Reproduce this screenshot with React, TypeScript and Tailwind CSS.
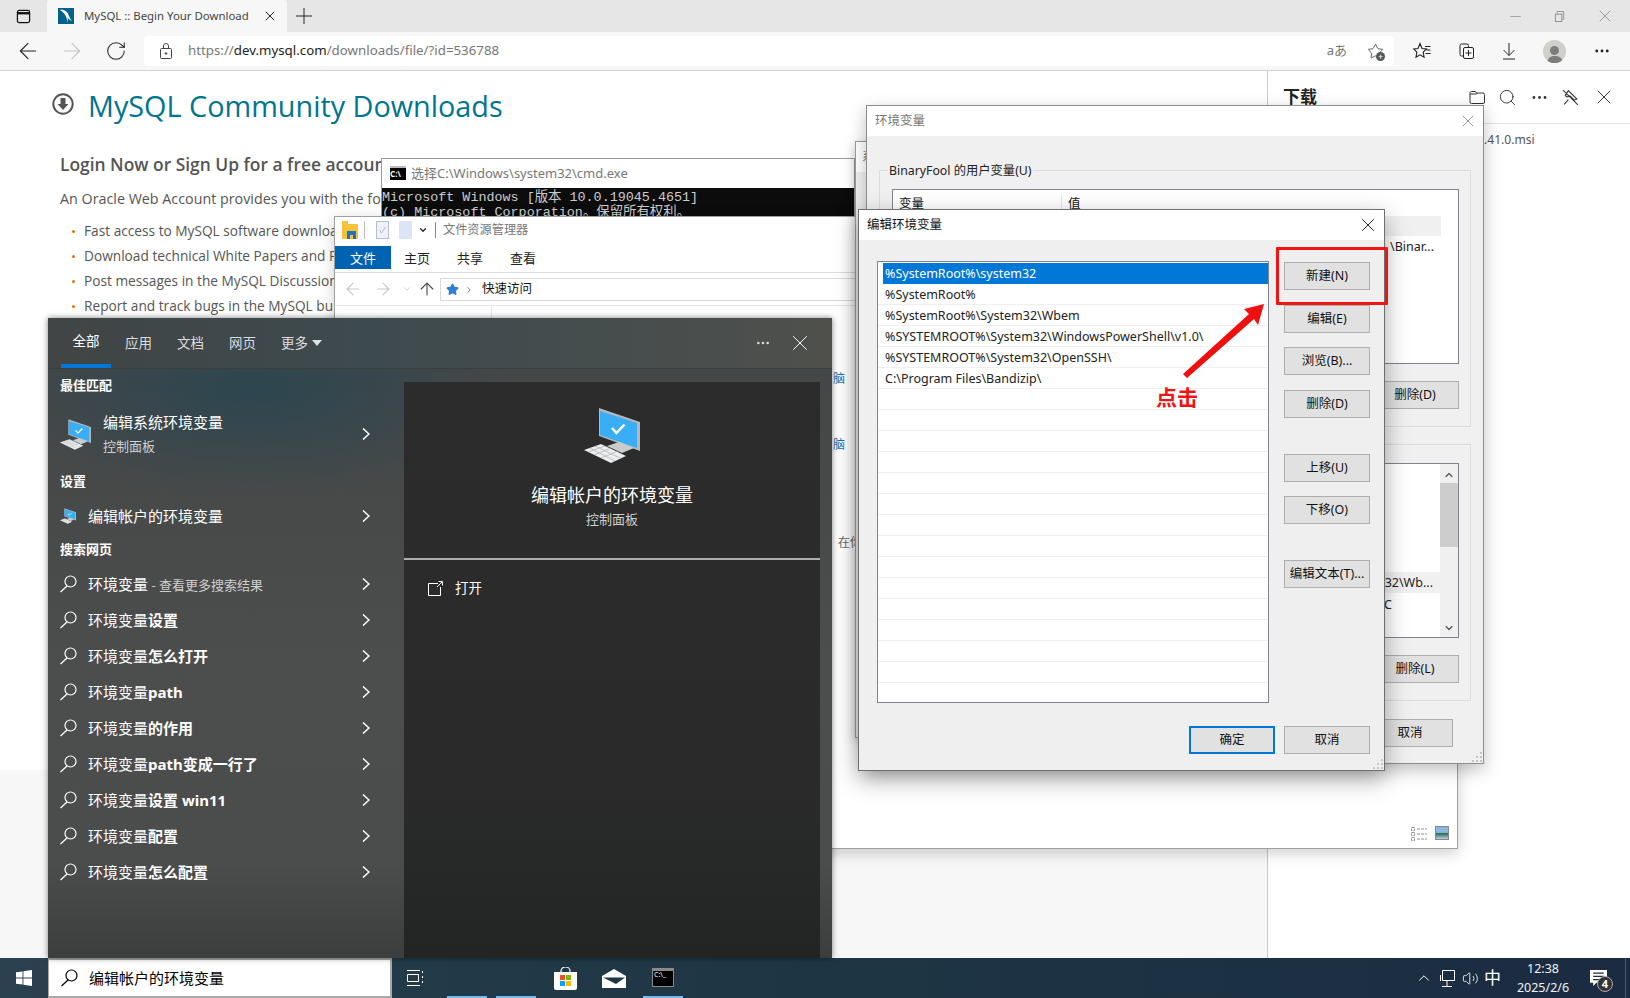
import { ArrowLeft, ArrowRight, ArrowUp, ChevronDown, ChevronRight, ChevronUp, Ellipsis, Minus, Plus, RotateCw, Search, Star, Volume2, X } from 'lucide-react'

const SEARCH_ROWS = [
  { main: '环境变量', hint: ' - 查看更多搜索结果' },
  { main: '环境变量', bold: '设置' },
  { main: '环境变量', bold: '怎么打开' },
  { main: '环境变量', bold: 'path' },
  { main: '环境变量', bold: '的作用' },
  { main: '环境变量', bold: 'path变成一行了' },
  { main: '环境变量', bold: '设置 win11' },
  { main: '环境变量', bold: '配置' },
  { main: '环境变量', bold: '怎么配置' },
]

const PATH_ROWS = [
  '%SystemRoot%\\system32',
  '%SystemRoot%',
  '%SystemRoot%\\System32\\Wbem',
  '%SYSTEMROOT%\\System32\\WindowsPowerShell\\v1.0\\',
  '%SYSTEMROOT%\\System32\\OpenSSH\\',
  'C:\\Program Files\\Bandizip\\',
  '', '', '', '', '', '', '', '', '', '', '', '', '', '', '',
]

// only what shows left of the windows lying over the page
const PAGE_BULLETS = [
  'Fast access to MySQL software downloa',
  'Download technical White Papers and P',
  'Post messages in the MySQL Discussion',
  'Report and track bugs in the MySQL bu',
]

function PcIcon({ className }: { className?: string }) {
  return (
    <svg viewBox="15 8 56 55" className={className}>
      <path d="M30 8 71 22V51L30 36Z" fill="#b4b8bb" />
      <path d="M31 11 68 23V48L31 35Z" fill="#3aaef5" />
      <path d="M43 28l4.500 5 8-8.500" fill="none" stroke="#fff" strokeWidth="2.400" />
      <path d="M38 46 50 42 65 48 53 53Z" fill="#c9cccd" />
      <path d="M15 50 32 44 57 56 42 63Z" fill="#eceeef" />
      <path d="M21 48 46 61M26 46 51 58M19 52 36 46M25 55 42 48M32 58 49 51" stroke="#a9adb0" strokeWidth="0.7" />
    </svg>
  )
}

function WinSearch({ className }: { className?: string }) {
  return (
    <svg viewBox="0 0 18 18" className={`w-[18px] h-[18px] shrink-0 ${className ?? ''}`} fill="none" stroke="currentColor" strokeWidth="1.200">
      <circle cx="11.500" cy="6.500" r="5.500" />
      <path d="M8 11 1.500 17" />
    </svg>
  )
}

function RowChevron() {
  return (
    <svg viewBox="0 0 8 12" className="w-[8px] h-[12px] shrink-0" fill="none" stroke="#fff" strokeWidth="1.500">
      <path d="M1 .5 7 6 1 11.500" />
    </svg>
  )
}

function MySqlFavicon() {
  return (
    <svg viewBox="0 0 16 16" className="w-4 h-4 shrink-0">
      <rect width="16" height="16" fill="#00618a" />
      <path d="M2 2C6 1 10 4 11 8c.6 2 1.600 3 3 5-2-.7-3.600-2-4.400-3.500L10 15 8.200 9C7.500 6.500 5 4 2 2Z" fill="#fff" />
    </svg>
  )
}

function WinButton({ label, focused, className }: { label: string; focused?: boolean; className?: string }) {
  return (
    <div className={`h-[28px] shrink-0 flex items-center justify-center bg-[#e1e1e1] text-[12.500px] text-[#111] ${focused ? 'border-2 border-[#0078d7]' : 'border border-[#adadad]'} ${className ?? 'w-[86px]'}`}>
      {label}
    </div>
  )
}

function ResizeGrip() {
  return (
    <svg viewBox="0 0 10 10" className="w-[10px] h-[10px]">
      <path d="M8 0h2v2H8zM4 4h2v2H4zM8 4h2v2H8zM0 8h2v2H0zM4 8h2v2H4zM8 8h2v2H8z" fill="#c4c4c4" />
    </svg>
  )
}

function BrowserChrome() {
  return (
    <div className="shrink-0">
      <div className="h-[32px] bg-[#e6e6e6] flex items-end">
        <div className="w-[47px] h-[32px] flex items-center justify-center">
          <svg viewBox="0 0 16 16" className="w-[15px] h-[15px]" fill="none" stroke="#111" strokeWidth="1.300">
            <rect x="1.500" y="1.500" width="13" height="13" rx="2" />
            <path d="M1.500 4.500h13" strokeWidth="2.500" />
          </svg>
        </div>
        <div className="w-[240px] h-[32px] bg-[#f7f7f7] rounded-t-[3px] flex items-center pl-[11px] pr-[9px]">
          <MySqlFavicon />
          <span className="ml-[10px] text-[11.400px] text-[#444] whitespace-nowrap flex-1">MySQL :: Begin Your Download</span>
          <X size={16} strokeWidth={1.5} className="text-[#222]" />
        </div>
        <div className="w-[34px] h-[32px] flex items-center justify-center">
          <Plus size={26} strokeWidth={0.9} className="text-[#222]" />
        </div>
        <div className="flex-1" />
        <div className="w-[138px] h-[32px] flex items-center justify-around text-[#8c8c8c]">
          <Minus size={17} strokeWidth={1} />
          <svg viewBox="0 0 12 12" className="w-[11px] h-[11px]" fill="none" stroke="#8c8c8c">
            <rect x="1.500" y="3.500" width="7" height="8" />
            <path d="M3.500 3V.500h7V9H9" />
          </svg>
          <X size={20} strokeWidth={1} />
        </div>
      </div>
      <div className="h-[38px] bg-[#f7f7f7] border-b border-[#d2d2d2] flex items-center box-content">
        <div className="w-[144px] flex items-center pl-[15px]">
          <ArrowLeft size={26} strokeWidth={1} className="text-[#222]" />
          <ArrowRight size={26} strokeWidth={1} className="ml-[18px] text-[#c4c4c4]" />
          <RotateCw size={22} strokeWidth={1.1} className="ml-[20px] text-[#222]" />
        </div>
        <div className="w-[1250px] h-[30px] bg-white rounded-[4px] flex items-center pl-[16px]">
          <svg viewBox="0 0 12 16" className="w-[12px] h-[16px]" fill="none" stroke="#444">
            <rect x="0.500" y="5.500" width="11" height="10" rx="1" />
            <path d="M3.500 5V3a2.500 2.500 0 0 1 5 0v2" />
            <circle cx="6" cy="10.500" r="0.800" fill="#444" />
          </svg>
          <span className="ml-[16px] text-[13.300px] text-[#777] whitespace-nowrap">
            https://<span className="text-[#222]">dev.mysql.com</span>/downloads/file/?id=536788
          </span>
          <div className="flex-1" />
          <span className="text-[13px] text-[#777] mr-[20px]">aあ</span>
          <div className="relative mr-[10px]">
            <Star size={17} strokeWidth={1.2} className="text-[#444]" />
            <div className="absolute -right-[1px] -bottom-[1px] w-[9px] h-[9px] rounded-full bg-[#555] text-white text-[9px] leading-[9px] text-center">+</div>
          </div>
        </div>
        <div className="flex-1 flex items-center justify-around pl-[6px] pr-[6px]">
          <svg viewBox="0 0 18 18" className="w-[18px] h-[18px]" fill="none" stroke="#222" strokeWidth="1.100">
            <path d="M7 1.500 9 6.500l4.500.5-3.300 3.200.9 5L7 12.800 3 15.200l.9-5L.7 7l4.300-.5zM12 4.500h5.500M13.500 8h4M12.500 11.500h5" />
          </svg>
          <svg viewBox="0 0 18 18" className="w-[18px] h-[18px]" fill="none" stroke="#222">
            <path d="M5 14H3.500A1.500 1.500 0 0 1 2 12.500v-9A1.500 1.500 0 0 1 3.500 2H9a1.500 1.500 0 0 1 1.500 1.500V5" />
            <rect x="5.500" y="5.500" width="10" height="11" rx="1.500" />
            <path d="M10.500 8v6M7.500 11h6" />
          </svg>
          <svg viewBox="0 0 14 18" className="w-[14px] h-[18px]" fill="none" stroke="#222">
            <path d="M7 1v12.500M1.500 8 7 13.500 12.500 8M1 17h12" />
          </svg>
          <div className="w-[23px] h-[23px] rounded-full bg-[#cfcfcc] flex flex-col items-center justify-end overflow-hidden">
            <div className="w-[9px] h-[9px] rounded-full bg-[#7d7d7b]" />
            <div className="w-[16px] h-[7px] mt-[1px] rounded-t-full bg-[#7d7d7b]" />
          </div>
          <Ellipsis size={18} strokeWidth={1.800} className="text-[#222]" />
        </div>
      </div>
    </div>
  )
}

function WebPage() {
  return (
    <div className="flex-1 min-h-0 flex">
      <div className="w-[1267px] flex flex-col">
        <div className="h-[699px] pl-[52px]">
          <div className="flex items-center pt-[18px]">
            <svg viewBox="0 0 22 22" className="w-[22px] h-[22px] -mt-[4px]" fill="none">
              <circle cx="11" cy="11" r="9.700" stroke="#555" strokeWidth="2" />
              <path d="M8.500 5h5v6h3L11 17l-5.500-6h3z" fill="#555" />
            </svg>
            <h1 className="ml-[14px] text-[28.800px] leading-[34px] text-[#00758f] font-['Open_Sans',sans-serif] whitespace-nowrap">MySQL Community Downloads</h1>
          </div>
          <div className="pl-[8px] pt-[28px] font-['Open_Sans',sans-serif] text-[#555]">
            <h2 className="text-[17.400px] leading-[26px] font-semibold whitespace-nowrap">Login Now or Sign Up for a free accoun</h2>
            <p className="mt-[10px] text-[14.300px] leading-[24px] whitespace-nowrap">An Oracle Web Account provides you with the fo</p>
            <ul className="mt-[7px] pl-[24px] text-[13.700px] leading-[25px] whitespace-nowrap">
              {PAGE_BULLETS.map(t => (
                <li key={t} className="relative">
                  <span className="absolute -left-[12px] top-[12px] w-[3px] h-[3px] rounded-full bg-[#e76f00]" />
                  {t}
                </li>
              ))}
            </ul>
          </div>
        </div>
        <div className="flex-1 bg-[#f7f7f7]" />
      </div>
      <aside className="flex-1 border-l border-[#c8c8c8]">
        <div className="h-[53px] border-b border-[#e2e2e2] flex items-center pl-[15px] pr-[14px]">
          <span className="text-[17px] font-bold text-[#222] flex-1">下载</span>
          <div className="flex items-center gap-[13px] text-[#333]">
            <svg viewBox="0 0 16 16" className="w-[16px] h-[16px]" fill="none" stroke="#333">
              <path d="M3 2.500h3.500l1 1.500H14a1.500 1.500 0 0 1 1.500 1.500v7.500a1.500 1.500 0 0 1-1.500 1.500H2.500A1.500 1.500 0 0 1 1 13V4a1.500 1.500 0 0 1 2-1.500ZM1 5h6.500l1-1" />
            </svg>
            <Search size={19} strokeWidth={1.2} />
            <Ellipsis size={19} strokeWidth={1.600} />
            <svg viewBox="0 0 16 16" className="w-[17px] h-[17px]" fill="none" stroke="#333">
              <path d="M1 1l14 14M6 1.500l8 8-2.500 1-4-4-3 1L3 6zM6 10l-4 4.500" />
            </svg>
            <X size={24} strokeWidth={1} />
          </div>
        </div>
        <div className="ml-[216px] mt-[7px] text-[12.100px] leading-[18px] text-[#555] whitespace-nowrap">.41.0.msi</div>
      </aside>
    </div>
  )
}

function CmdWindow() {
  return (
    <div className="absolute left-[381px] top-[158px] w-[474px] h-[58px] border border-[#9a9a9a] border-b-0 bg-white overflow-hidden">
      <div className="h-[29px] pb-[2px] flex items-center pl-[8px]">
        <div className="w-[16px] h-[14px] bg-black border-t-[2px] border-[#bbb] text-white text-[8px] leading-[11px] font-bold">C:\</div>
        <span className="ml-[5px] text-[13px] leading-[18px] text-[#777] whitespace-nowrap">选择C:\Windows\system32\cmd.exe</span>
      </div>
      <div className="bg-[#0c0c0c] text-[#ccc] font-['Liberation_Mono','Noto_Sans_CJK_SC',monospace] text-[13.400px] leading-[15px] h-[40px] pt-[2px] whitespace-nowrap">
        <div>Microsoft Windows [版本 10.0.19045.4651]</div>
        <div>(c) Microsoft Corporation。保留所有权利。</div>
      </div>
    </div>
  )
}

function ExplorerWindow() {
  return (
    <div className="absolute left-[334px] top-[216px] w-[1124px] h-[633px] bg-white border border-[#a0a0a0] shadow-[0_4px_14px_rgba(0,0,0,0.2)] flex flex-col">
      <div className="h-[29px] pb-[3px] flex items-center pl-[7px] shrink-0">
        <svg viewBox="0 0 16 18" className="w-[16px] h-[18px]">
          <path d="M0 0h6v3h10v15H0z" fill="#f5c33b" />
          <path d="M5 10h9v8h-3v-4H8v4H5z" fill="#1e73c8" />
        </svg>
        <div className="w-px h-[18px] bg-[#bbb] ml-[6px]" />
        <svg viewBox="0 0 13 18" className="ml-[11px] w-[13px] h-[18px]" fill="#eef2f8" stroke="#b3bdcc">
          <rect x="0.500" y="0.500" width="12" height="17" />
          <path d="M3.500 9l2 3 4-6" fill="none" />
        </svg>
        <div className="ml-[10px] w-[13px] h-[18px] bg-[#dbe5f5]" />
        <ChevronDown size={10} strokeWidth={3} className="ml-[6px] text-[#222]" />
        <div className="w-px h-[16px] bg-[#888] ml-[7px]" />
        <span className="ml-[7px] text-[12.200px] leading-[18px] text-[#777]">文件资源管理器</span>
      </div>
      <div className="h-[26px] flex items-start text-[13px] leading-[24px] text-[#222] shrink-0">
        <div className="w-[56px] h-[23px] bg-[#0063b1] text-white text-center">文件</div>
        <span className="w-[52px] text-center">主页</span>
        <span className="w-[54px] text-center">共享</span>
        <span className="w-[52px] text-center">查看</span>
      </div>
      <div className="h-[33px] border-t border-[#dcdcdc] flex items-start pt-[5px] shrink-0 pl-[8px]">
        <ArrowLeft size={20} strokeWidth={1.300} className="mt-[1px] text-[#c6c6c6]" />
        <ArrowRight size={20} strokeWidth={1.300} className="mt-[1px] ml-[10px] text-[#c6c6c6]" />
        <ChevronDown size={10} className="mt-[6px] ml-[9px] text-[#c6c6c6]" />
        <ArrowUp size={20} strokeWidth={1.300} className="mt-[1px] ml-[5px] text-[#444]" />
        <div className="ml-[3px] flex-1 h-[23px] border border-[#d9d9d9] flex items-center pl-[5px] text-[12.500px] text-[#111]">
          <Star size={13} className="text-[#2d7fd6] fill-[#2d7fd6]" />
          <ChevronRight size={10} className="ml-[5px] mr-[8px] text-[#666]" />
          快速访问
        </div>
      </div>
      <div className="flex-1 min-h-0 flex flex-col border-t border-[#e6e6e6] relative">
        <div className="w-[157px] h-[20px] border-r border-[#e6e6e6]" />
        <div className="pl-[498px] pt-[44px] text-[12px] text-[#1a6fb0] leading-[18px]">脑</div>
        <div className="pl-[498px] pt-[48px] text-[12px] text-[#1a6fb0] leading-[18px]">脑</div>
        <div className="ml-[503px] mt-[80px] text-[12px] text-[#666] leading-[18px] whitespace-nowrap">在你</div>
        <div className="flex-1" />
        <div className="h-[22px] flex items-start justify-end gap-[8px] pr-[8px]">
          <svg viewBox="0 0 16 16" className="w-[16px] h-[16px]" fill="none" stroke="#8d8d8d">
            <path d="M.500 1.500h3v3h-3zM.500 6.500h3v3h-3zM.500 11.500h3v3h-3zM6 3h10M6 8h10M6 13h10" strokeDasharray="3 1" />
          </svg>
          <div className="w-[14px] h-[14px] border border-[#888] bg-[linear-gradient(180deg,#8db7de_45%,#2c6a4f_55%,#bcd3ea)]" />
        </div>
      </div>
    </div>
  )
}

function SystemPropsBehind() {
  return (
    <div className="absolute left-[855px] top-[141px] w-[300px] h-[597px] bg-[#f0f0f0] border border-[#9a9a9a] shadow-[0_4px_12px_rgba(0,0,0,0.25)]">
      <div className="h-[30px] bg-white pl-[6px] text-[12px] leading-[30px] text-[#777]">系</div>
    </div>
  )
}

function EnvGroup({ legend, children }: { legend: string; children: React.ReactNode }) {
  return (
    <div className="relative h-[257px] border border-[#dcdcdc] pl-[12px] pr-[11px] pt-[18px]">
      {legend && <span className="absolute left-[8px] -top-[9px] bg-[#f0f0f0] px-[1px] text-[12.300px] leading-[18px] text-[#222] whitespace-nowrap">{legend}</span>}
      {children}
    </div>
  )
}

function EnvDialog() {
  return (
    <div className="absolute left-[866px] top-[105px] w-[618px] h-[659px] border border-[#8d8d8d] bg-[#f0f0f0] shadow-[0_6px_16px_rgba(0,0,0,0.25)] flex flex-col">
      <div className="h-[30px] bg-white flex items-center justify-between pl-[8px] pr-[5px] shrink-0">
        <span className="text-[12.500px] text-[#777]">环境变量</span>
        <X size={20} strokeWidth={0.9} className="text-[#777]" />
      </div>
      <div className="flex-1 px-[12px] pt-[34px] flex flex-col gap-[17px] relative">
        <EnvGroup legend="BinaryFool 的用户变量(U)">
          <div className="h-[175px] bg-white border border-[#82828c] flex flex-col">
            <div className="h-[26px] pt-[2px] w-[548px] flex text-[12.500px] text-[#111] items-center shrink-0">
              <span className="w-[169px] pl-[6px] border-r border-[#e5e5e5]">变量</span>
              <span className="pl-[6px]">值</span>
            </div>
            <div className="h-[20px] w-[548px] bg-[#f0f0f0] shrink-0" />
            <div className="w-[541px] text-right text-[12.500px] leading-[21px] text-[#222] whitespace-nowrap">\Binar...</div>
          </div>
          <div className="flex justify-end mt-[17px]">
            <WinButton label="删除(D)" className="w-[88px]" />
          </div>
        </EnvGroup>
        <EnvGroup legend="">
          <div className="h-[175px] bg-white border border-[#82828c] flex">
            <div className="flex-1 min-w-0 pt-[108px] text-[12.500px] text-[#222]">
              <div className="h-[21px] bg-[#f0f0f0] leading-[21px] pr-[7px] text-right whitespace-nowrap overflow-hidden">32\Wb...</div>
              <div className="h-[21px] leading-[21px] pl-[491px] mt-[1px]">C</div>
            </div>
            <div className="w-[18px] bg-[#f0f0f0] flex flex-col items-center shrink-0">
              <ChevronUp size={12} strokeWidth={2.500} className="mt-[5px] text-[#555]" />
              <div className="w-full h-[64px] mt-[2px] bg-[#cdcdcd]" />
              <div className="flex-1" />
              <ChevronDown size={12} strokeWidth={2.500} className="mb-[3px] text-[#555]" />
            </div>
          </div>
          <div className="flex justify-end mt-[17px]">
            <WinButton label="删除(L)" className="w-[88px]" />
          </div>
        </EnvGroup>
        <div className="flex justify-end pr-[18px] pt-[1px]">
          <WinButton label="取消" />
        </div>
        <div className="absolute right-[1px] bottom-[1px]"><ResizeGrip /></div>
      </div>
    </div>
  )
}

function EditDialog() {
  return (
    <div className="absolute left-[858px] top-[209px] w-[527px] h-[562px] border border-[#6f6f6f] bg-[#efefef] shadow-[0_8px_22px_rgba(0,0,0,0.35)] flex flex-col">
      <div className="h-[30px] bg-white flex items-center justify-between pl-[8px] pr-[5px] shrink-0">
        <span className="text-[12.500px] text-[#111]">编辑环境变量</span>
        <X size={22} strokeWidth={1} className="text-[#111]" />
      </div>
      <div className="flex-1 flex flex-col pl-[18px] pr-[14px] pt-[21px] relative">
        <div className="flex">
          <div className="w-[392px] h-[442px] bg-white border border-[#82828c] pt-[1px] overflow-hidden">
            {PATH_ROWS.map((r, i) => (
              <div key={i} className={`h-[21px] pt-[1px] text-[12.500px] leading-[20px] whitespace-nowrap ${i === 0 ? 'ml-[5px] pl-[2px] bg-[#0078d7] text-white' : 'border-b border-[#efefef] pl-[7px] text-[#222]'}`}>
                {r}
              </div>
            ))}
          </div>
          <div className="ml-[15px] pt-[1px] flex flex-col">
            <WinButton label="新建(N)" />
            <WinButton label="编辑(E)" className="w-[86px] mt-[15px]" />
            <WinButton label="浏览(B)..." className="w-[86px] mt-[14px]" />
            <WinButton label="删除(D)" className="w-[86px] mt-[15px]" />
            <WinButton label="上移(U)" className="w-[86px] mt-[36px]" />
            <WinButton label="下移(O)" className="w-[86px] mt-[14px]" />
            <WinButton label="编辑文本(T)..." className="w-[86px] mt-[36px]" />
          </div>
        </div>
        <div className="flex justify-end gap-[9px] mt-[23px]">
          <WinButton label="确定" focused />
          <WinButton label="取消" />
        </div>
        <div className="absolute right-[1px] bottom-[1px]"><ResizeGrip /></div>
      </div>
    </div>
  )
}

function StartPanel() {
  return (
    <div className="absolute left-[48px] top-[318px] w-[784px] h-[640px] flex flex-col text-white bg-[#3f4141] bg-[radial-gradient(ellipse_260px_110px_at_26%_11%,#2d4650_0%,rgba(45,70,80,0)_100%),linear-gradient(180deg,#434646_0%,#4c4d4d_55%,#4b4c4c_85%,#3c3e3e_100%)] shadow-[0_0_6px_rgba(0,0,0,0.5)]">
      <div className="h-[51px] shrink-0 flex border-b border-[#3c3e3e] text-[13.500px] relative bg-[linear-gradient(90deg,#414545,#3d4a4e_40%,#4f504c)]">
        <div className="w-[50px] ml-[13px] h-full flex items-center justify-center border-b-[4px] border-[#0078d7] text-white">全部</div>
        <div className="ml-[14px] flex items-center gap-[25px] text-[#dcdcdc]">
          <span>应用</span>
          <span>文档</span>
          <span>网页</span>
          <span className="flex items-center gap-[4px]">
            更多
            <span className="w-0 h-0 border-x-[5px] border-x-transparent border-t-[6px] border-t-[#e0e0e0]" />
          </span>
        </div>
        <div className="flex-1" />
        <div className="flex items-center pr-[19px] gap-[16px]">
          <Ellipsis size={16} className="text-[#d8d8d8]" />
          <X size={26} strokeWidth={0.9} />
        </div>
      </div>
      <div className="flex-1 min-h-0 flex">
        <div className="w-[344px] shrink-0 text-[15px]">
          <h3 className="h-[34px] pl-[12px] flex items-center text-[13px] font-bold">最佳匹配</h3>
          <div className="h-[62px] flex items-center pl-[12px] pr-[22px]">
            <PcIcon className="w-[31px] h-[31px] shrink-0" />
            <div className="ml-[12px] flex-1">
              <div className="leading-[22px]">编辑系统环境变量</div>
              <div className="text-[13px] leading-[22px] text-[#d0d0d0] mt-[2px]">控制面板</div>
            </div>
            <RowChevron />
          </div>
          <h3 className="h-[34px] pl-[12px] flex items-center text-[13px] font-bold">设置</h3>
          <div className="h-[34px] flex items-center pl-[12px] pr-[22px]">
            <PcIcon className="w-[16px] h-[16px] shrink-0" />
            <span className="ml-[12px] flex-1">编辑帐户的环境变量</span>
            <RowChevron />
          </div>
          <h3 className="h-[33px] pl-[12px] flex items-center text-[13px] font-bold">搜索网页</h3>
          {SEARCH_ROWS.map((r, i) => (
            <div key={i} className="h-[36px] flex items-center pl-[11px] pr-[22px]">
              <WinSearch className="text-white" />
              <span className="ml-[11px] flex-1 whitespace-nowrap">
                {r.main}
                {r.bold && <b className="font-bold">{r.bold}</b>}
                {r.hint && <span className="text-[13px] text-[#cfcfcf]">{r.hint}</span>}
              </span>
              <RowChevron />
            </div>
          ))}
        </div>
        <div className="ml-[12px] w-[416px] mt-[13px] bg-[#2b2b2b] bg-[linear-gradient(180deg,#2c2c2c,#2a2a2a_70%,#232525)] flex flex-col">
          <div className="h-[176px] shrink-0 border-b-[2px] border-[#adadad] box-content flex flex-col items-center">
            <PcIcon className="w-[56px] h-[55px] mt-[26px]" />
            <div className="mt-[19px] text-[18px] leading-[26px]">编辑帐户的环境变量</div>
            <div className="mt-[2px] text-[13px] leading-[18px] text-[#cfcfcf]">控制面板</div>
          </div>
          <div className="flex items-center pl-[24px] pt-[18px] text-[13.500px] leading-[20px]">
            <svg viewBox="0 0 15 15" className="w-[15px] h-[15px]" fill="none" stroke="#fff">
              <path d="M10 2.500H.500v12h12V6M9 6l5-5M10.500 .500h4v4" strokeWidth="1" />
            </svg>
            <span className="ml-[12px]">打开</span>
          </div>
        </div>
      </div>
    </div>
  )
}

function Taskbar() {
  return (
    <div className="h-[40px] shrink-0 flex items-stretch relative bg-[linear-gradient(90deg,#2b4150,#233b48_25%,#1e3644_50%,#1b2b42_100%)]">
      <div className="w-[48px] flex items-center justify-center">
        <svg viewBox="0 0 16 16" className="w-[16px] h-[16px]" fill="#fff">
          <path d="M0 2.300 6.500 1.400v6.200H0zM7.400 1.300 16 0v7.600H7.400zM0 8.400h6.500v6.200L0 13.700zM7.400 8.400H16V16l-8.600-1.300z" />
        </svg>
      </div>
      <div className="w-[344px] bg-white border-2 border-[#a9a9a9] border-l-[1px] flex items-center pl-[11px] text-black text-[15px]">
        <WinSearch />
        <span className="ml-[11px]">编辑帐户的环境变量</span>
      </div>
      <div className="w-[55px] flex items-center pl-[15px]">
        <svg viewBox="0 0 17 16" className="w-[17px] h-[16px]" fill="none" stroke="#fff">
          <path d="M0 .500h13M0 15.500h13M.500 4.500h11v7H.500zM15.500 1v2M15.500 6v2M15.500 11v2" />
        </svg>
      </div>
      <div className="w-[40px] border-b-[2px] border-[#76b9ed]" />
      <div className="w-[40px] ml-[9px] border-b-[2px] border-[#76b9ed]" />
      <div className="w-[48px] ml-[5px] flex items-center justify-center">
        <svg viewBox="0 0 23 23" className="w-[23px] h-[23px]">
          <path d="M7 6V4a4.500 4 0 0 1 9 0v2" fill="none" stroke="#fff" strokeWidth="1.200" />
          <path d="M0 5h23v16a2 2 0 0 1-2 2H2a2 2 0 0 1-2-2z" fill="#fff" />
          <path d="M6 8h5v5H6z" fill="#f25022" />
          <path d="M12 8h5v5h-5z" fill="#7fba00" />
          <path d="M6 14h5v5H6z" fill="#00a4ef" />
          <path d="M12 14h5v5h-5z" fill="#ffb900" />
        </svg>
      </div>
      <div className="w-[49px] flex items-center justify-center">
        <svg viewBox="0 0 24 19" className="w-[24px] h-[19px]">
          <path d="M0 7 12 0 24 7V19H0Z" fill="#fff" />
          <path d="M1 8.500h22L14 15Z" fill="#1f3644" />
        </svg>
      </div>
      <div className="w-[40px] ml-[5px] border-b-[2px] border-[#76b9ed] flex items-center justify-center">
        <div className="w-[22px] h-[19px] bg-black border border-[#8a8a8a] border-t-[3px] text-white text-[7px] leading-[8px] pl-[1px]">C:\_</div>
      </div>
      <div className="flex-1" />
      <div className="flex items-center text-white pr-[4px]">
        <ChevronUp size={18} strokeWidth={1.300} className="-ml-[6px]" />
        <svg viewBox="0 0 15 17" className="ml-[7px] w-[15px] h-[17px]" fill="none" stroke="#fff">
          <path d="M2.500 .500h12v10h-12zM7 11v5M2 16.500h10M.500 5v6" />
        </svg>
        <Volume2 size={17} strokeWidth={1.200} className="ml-[7px]" />
        <span className="ml-[5px] text-[17px] w-[18px]">中</span>
        <div className="ml-[6px] w-[70px] text-center text-[12.500px] leading-[19px] text-[#f2f2f2]">
          <div>12:38</div>
          <div>2025/2/6</div>
        </div>
        <div className="relative ml-[12px] mr-[18px]">
          <svg viewBox="0 0 16 15" className="w-[17px] h-[16px]">
            <path d="M0 0h16v12H6l-3 3v-3H0z" fill="#fff" />
            <path d="M3 3h10M3 6h10M3 9h7" stroke="#1b2b42" strokeWidth="1.200" />
          </svg>
          <span className="absolute left-[7px] top-[6px] w-[16px] h-[16px] rounded-full bg-[#333] border border-[#aaa] text-[11px] leading-[14px] text-center font-bold">4</span>
        </div>
        <div className="w-px h-full bg-[#4a5a6a]" />
      </div>
    </div>
  )
}

export default function App() {
  return (
    <div className="relative w-[1630px] h-[998px] overflow-hidden flex flex-col bg-white font-['Noto_Sans','Noto_Sans_CJK_SC',sans-serif]">
      <BrowserChrome />
      <WebPage />
      <Taskbar />

      <CmdWindow />
      <ExplorerWindow />
      <SystemPropsBehind />
      <EnvDialog />
      <EditDialog />
      <StartPanel />

      {/* annotation on top of the screenshot */}
      <div className="absolute left-[1276px] top-[247px] w-[112px] h-[58px] border-[3px] border-[#f01414] rounded-[1px]" />
      <svg viewBox="0 0 90 80" className="absolute left-[1180px] top-[300px] w-[90px] h-[80px]">
        <path d="M84 4 64 9 69 14 3 74 7 78 74 19 78 25Z" fill="#f00f0f" />
      </svg>
      <span className="absolute left-[1156px] top-[385px] text-[21px] leading-[24px] font-bold text-[#f01414]">点击</span>
    </div>
  )
}
